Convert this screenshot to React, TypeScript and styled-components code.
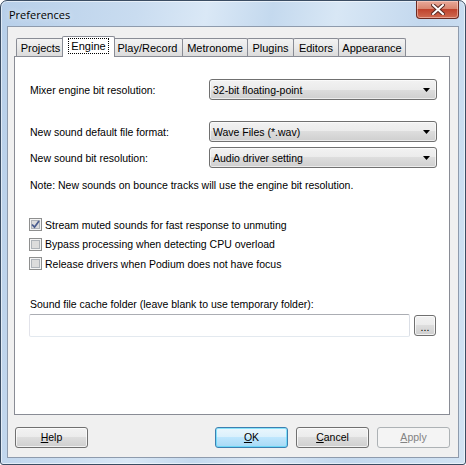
import styled, { createGlobalStyle } from "styled-components";

const GlobalStyle = createGlobalStyle`
  html, body {
    margin: 0;
    padding: 0;
    background: #ffffff;
  }
  body {
    font-family: "Liberation Sans", Arial, sans-serif;
    font-size: 10.5px;
    color: #000000;
  }
  * {
    box-sizing: border-box;
  }
`;

const tabs = [
  { label: "Projects", width: 49 },
  { label: "Engine", width: 49 },
  { label: "Play/Record", width: 71 },
  { label: "Metronome", width: 66 },
  { label: "Plugins", width: 47 },
  { label: "Editors", width: 46 },
  { label: "Appearance", width: 68 },
];

const checks = [
  { label: "Stream muted sounds for fast response to unmuting", checked: true },
  { label: "Bypass processing when detecting CPU overload", checked: false },
  { label: "Release drivers when Podium does not have focus", checked: false },
];

const ArrowIcon = () => (
  <svg width='7' height='4' viewBox='0 0 7 4'>
    <path d='M0 0 H7 L3.5 4 Z' fill='#000' />
  </svg>
);

const CheckIcon = () => (
  <svg width='9' height='9' viewBox='0 0 9 9'>
    <path
      d='M1 4.5 L3.5 7.2 L8 1'
      fill='none'
      stroke='#4a5d8f'
      strokeWidth='1.8'
    />
  </svg>
);

const CloseIcon = () => (
  <svg width='14' height='11' viewBox='0 0 14 11'>
    <path
      d='M2 1 L12 10 M12 1 L2 10'
      stroke='#5a2a24'
      strokeWidth='4'
      strokeLinecap='square'
    />
    <path
      d='M2 1 L12 10 M12 1 L2 10'
      stroke='#ffffff'
      strokeWidth='2'
      strokeLinecap='square'
    />
  </svg>
);

const Preferences = () => {
  return (
    <>
      <GlobalStyle />
      <Window>
        <TitleBar>
          <TitleText>Preferences</TitleText>
          <CloseButton>
            <CloseIcon />
          </CloseButton>
        </TitleBar>
        <Client>
          <TabStrip>
            {tabs.map((t) => (
              <Tab key={t.label} $w={t.width} $active={t.label === "Engine"}>
                {t.label === "Engine" ? <Focus>{t.label}</Focus> : t.label}
              </Tab>
            ))}
          </TabStrip>
          <Panel>
            <FieldRow>
              <Label>Mixer engine bit resolution:</Label>
              <Combo>
                <span>32-bit floating-point</span>
                <ArrowIcon />
              </Combo>
            </FieldRow>
            <FieldRow $gap={21}>
              <Label>New sound default file format:</Label>
              <Combo>
                <span>Wave Files (*.wav)</span>
                <ArrowIcon />
              </Combo>
            </FieldRow>
            <FieldRow $gap={5}>
              <Label>New sound bit resolution:</Label>
              <Combo>
                <span>Audio driver setting</span>
                <ArrowIcon />
              </Combo>
            </FieldRow>
            <Note>
              Note: New sounds on bounce tracks will use the engine bit
              resolution.
            </Note>
            <CheckList>
              {checks.map((c) => (
                <CheckRow key={c.label}>
                  <CheckBox>{c.checked && <CheckIcon />}</CheckBox>
                  <span>{c.label}</span>
                </CheckRow>
              ))}
            </CheckList>
            <Note $top={28}>
              Sound file cache folder (leave blank to use temporary folder):
            </Note>
            <FolderRow>
              <TextBox />
              <Button $small>...</Button>
            </FolderRow>
          </Panel>
          <ButtonRow>
            <Button>
              <u>H</u>elp
            </Button>
            <Spacer />
            <Button $default>
              <u>O</u>K
            </Button>
            <Button>
              <u>C</u>ancel
            </Button>
            <Button disabled>
              <u>A</u>pply
            </Button>
          </ButtonRow>
        </Client>
      </Window>
    </>
  );
};

const Window = styled.div`
  width: 466px;
  height: 465px;
  border: 1px solid #3b4d63;
  border-radius: 7px 7px 3px 3px;
  padding: 0 6px 6px 6px;
  display: flex;
  flex-direction: column;
  background: linear-gradient(
    100deg,
    #b7cfe9 0%,
    #c9dcf0 25%,
    #dae8f6 38%,
    #c4d9ee 50%,
    #d8e7f5 62%,
    #c3d8ee 78%,
    #d2e3f3 100%
  );
  box-shadow: inset 0 0 0 1px rgba(255, 255, 255, 0.55);
`;

const TitleBar = styled.div`
  height: 25px;
  display: flex;
  align-items: flex-start;
`;

const TitleText = styled.div`
  font-family: "Open Sans", "Noto Sans", sans-serif;
  font-size: 11px;
  padding: 6px 0 0 2px;
  color: #000000;
  text-shadow: 0 0 6px rgba(255, 255, 255, 0.9);
`;

const CloseButton = styled.div`
  margin-left: auto;
  width: 43px;
  height: 18px;
  display: flex;
  align-items: center;
  justify-content: center;
  border: 1px solid #6b2a22;
  border-top: none;
  border-radius: 0 0 4px 4px;
  background: linear-gradient(
    #e9a99a 0%,
    #d98670 45%,
    #c0432d 50%,
    #cf6b52 100%
  );
  box-shadow: inset 0 0 0 1px rgba(255, 220, 210, 0.5);
`;

const Client = styled.div`
  flex: 1;
  border: 1px solid #8e9bad;
  background: #f0f0f0;
  display: flex;
  flex-direction: column;
  padding: 9px 8px 0 6px;
`;

const TabStrip = styled.div`
  display: flex;
  align-items: flex-end;
  height: 20px;
  padding-left: 2px;
`;

const Tab = styled.div<{ $w: number; $active?: boolean }>`
  width: ${(p) => (p.$active ? p.$w + 4 : p.$w)}px;
  height: ${(p) => (p.$active ? 21 : 18)}px;
  margin-left: ${(p) => (p.$active ? -3 : -1)}px;
  margin-right: ${(p) => (p.$active ? -2 : 0)}px;
  margin-bottom: ${(p) => (p.$active ? -1 : 0)}px;
  position: relative;
  z-index: ${(p) => (p.$active ? 2 : 1)};
  border: 1px solid #898c95;
  border-bottom: none;
  border-radius: 2px 2px 0 0;
  background: ${(p) =>
    p.$active ? "#ffffff" : "linear-gradient(#f3f3f3, #e9e9e9 50%, #dbdbdb)"};
  display: flex;
  align-items: ${(p) => (p.$active ? "flex-start" : "center")};
  justify-content: center;
  padding-top: ${(p) => (p.$active ? 2 : 0)}px;
  font-size: 11px;
  &:first-child {
    margin-left: 0;
  }
`;

const Focus = styled.span`
  outline: 1px dotted #000000;
  padding: 1px 2px;
`;

const Panel = styled.div`
  width: 436px;
  height: 359px;
  background: #ffffff;
  border: 1px solid #898c95;
  padding: 22px 12px 0 15px;
  display: flex;
  flex-direction: column;
`;

const FieldRow = styled.div<{ $gap?: number }>`
  display: flex;
  align-items: center;
  margin-top: ${(p) => p.$gap ?? 0}px;
`;

const Label = styled.div`
  width: 179px;
`;

const Combo = styled.div`
  width: 228px;
  height: 21px;
  border: 1px solid #707070;
  border-radius: 3px;
  background: linear-gradient(#f2f2f2 0%, #ebebeb 50%, #dddddd 50%, #cfcfcf 100%);
  box-shadow: inset 0 0 0 1px rgba(255, 255, 255, 0.6);
  display: flex;
  align-items: center;
  justify-content: space-between;
  padding: 0 6px 0 3px;
`;

const Note = styled.div<{ $top?: number }>`
  margin-top: ${(p) => p.$top ?? 11}px;
  line-height: 13px;
`;

const CheckList = styled.div`
  display: flex;
  flex-direction: column;
  gap: 6.5px;
  margin-top: 26px;
  margin-left: -1px;
`;

const CheckRow = styled.div`
  display: flex;
  align-items: center;
  gap: 3px;
  height: 13px;
`;

const CheckBox = styled.div`
  width: 13px;
  height: 13px;
  border: 1px solid #8e8f8f;
  background: #f4f4f4;
  box-shadow: inset 0 0 0 1px #f4f4f4, inset 0 0 0 2px #aeb3b9,
    inset 0 0 0 6px #dcdcdc;
  display: flex;
  align-items: center;
  justify-content: center;
`;

const FolderRow = styled.div`
  display: flex;
  align-items: center;
  gap: 4px;
  margin-top: 3px;
  margin-left: -1px;
`;

const TextBox = styled.div`
  width: 381px;
  height: 23px;
  border: 1px solid;
  border-color: #abadb3 #dbdfe6 #e3e9ef #e2e3ea;
  border-radius: 2px;
  background: #ffffff;
`;

const ButtonRow = styled.div`
  display: flex;
  gap: 8px;
  margin-top: 12px;
  padding-left: 1px;
`;

const Spacer = styled.div`
  flex: 1;
`;

const Button = styled.button<{ $default?: boolean; $small?: boolean }>`
  font-family: "Liberation Sans", Arial, sans-serif;
  font-size: 10.5px;
  color: #000000;
  width: ${(p) => (p.$small ? 22 : 73)}px;
  height: 21px;
  padding: ${(p) => (p.$small ? "4px 0 0" : "0")};
  border: 1px solid ${(p) => (p.$default ? "#3c7fb1" : "#707070")};
  border-radius: 3px;
  background: ${(p) =>
    p.$default
      ? "linear-gradient(#eaf6fd 0%, #d9f0fc 50%, #bee6fd 50%, #a7d9f5 100%)"
      : "linear-gradient(#f2f2f2 0%, #ebebeb 50%, #dddddd 50%, #cfcfcf 100%)"};
  box-shadow: inset 0 0 0 1px
    ${(p) => (p.$default ? "rgba(72, 215, 249, 0.6)" : "rgba(255, 255, 255, 0.7)")};
  line-height: 13px;
  &:disabled {
    color: #838383;
    border-color: #adb2b5;
    background: #f4f4f4;
    box-shadow: none;
  }
`;

export default Preferences;
